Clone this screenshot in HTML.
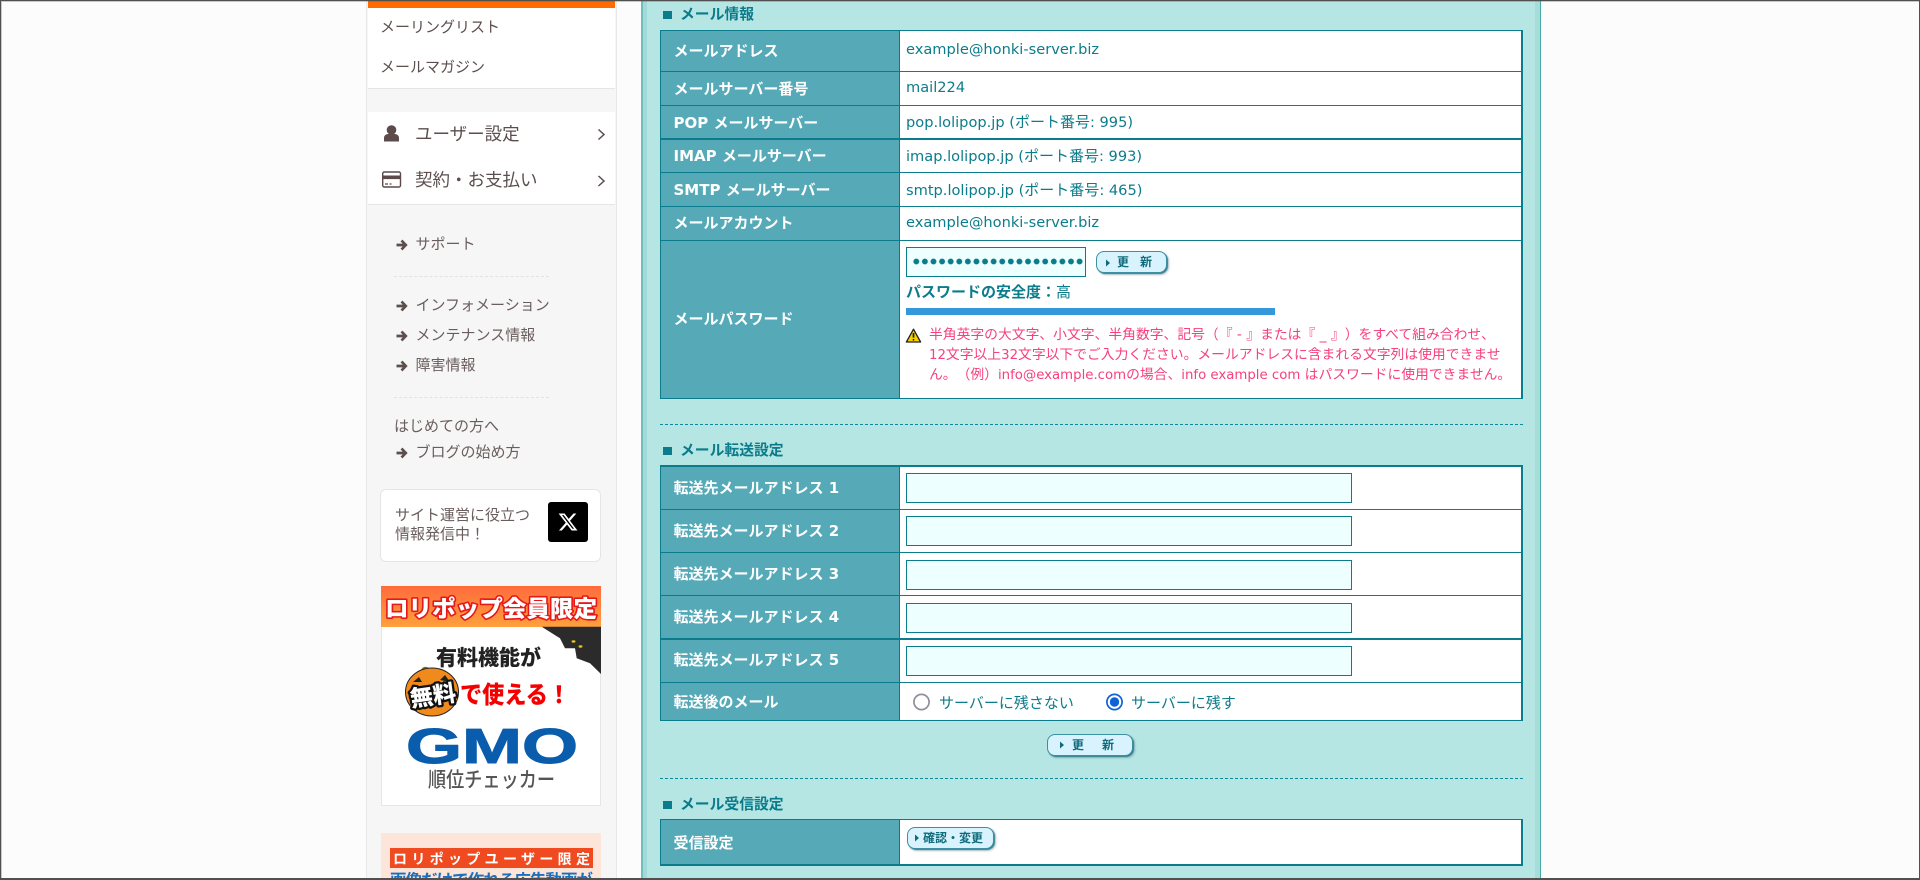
<!DOCTYPE html>
<html lang="ja"><head><meta charset="utf-8"><title>メール設定</title>
<style>
html,body{margin:0;padding:0;width:1920px;height:880px;overflow:hidden;background:#fcfcfc}
body{position:relative;font-family:"DejaVu Sans","Noto Sans CJK JP",sans-serif;color:#0b7c8b;text-spacing-trim:space-all}
div,span,a{position:absolute}
.t span{position:static}
.b{background:#fcfcfc}
.t{white-space:nowrap;line-height:20px;font-size:14px;color:#0b7c8b}
.s{color:#5d4e4e;font-size:15px}
.g{color:#6a5d5d;font-size:15px}
.big{color:#5d4e4e;font-size:17.5px}
.h{font-weight:700;font-size:14.8px;left:680px;color:#0b7b8b}
.l{font-weight:700;font-size:15px;left:673.5px;color:#fff}
.v{left:906px;font-size:14.6px}
.v span{font-size:15px}
.p{left:929px;color:#f6407f;font-size:13.8px}
.p span{font-size:13.3px}
.ln{background:#0a7c8c;left:660px;width:863px;height:1px}
.in{left:906px;width:444px;background:#eeffff;border:1px solid #0a7c8c;height:28px}
.btn{background:#d8f3fd;border:1px solid #3d90a2;border-radius:8px;box-shadow:1px 1px 1px #2f7f90,2px 2px 2px rgba(60,90,100,.3);box-sizing:border-box;height:22px}
.bt{white-space:nowrap;font-weight:700;font-size:12px;line-height:20px;color:#0f6b7b}
.dash{left:660px;width:863px;height:0;border-top:1px dashed #0a8a9a}
.sd{left:394px;width:155px;height:0;border-top:1px dashed #e2e2e2}
</style></head><body>

<!-- sidebar -->
<div style="left:366px;top:0;width:251px;height:880px;background:#f6f6f6;border-left:1px solid #e8e8e8;border-right:1px solid #e8e8e8;box-sizing:border-box"></div>
<div style="left:368px;top:0;width:247px;height:8px;background:#ff6b00"></div>
<div style="left:368px;top:8px;width:247px;height:80px;background:#fff;border-bottom:1px solid #e5e5e5"></div>
<div style="left:368px;top:112px;width:247px;height:92px;background:#fff;border-bottom:1px solid #e5e5e5"></div>

<span class="t s" style="left:380px;top:17px">メーリングリスト</span>
<span class="t s" style="left:380px;top:57px">メールマガジン</span>
<span class="t big" style="left:415px;top:124.5px">ユーザー設定</span>
<span class="t big" style="left:415px;top:170.5px">契約・お支払い</span>
<span class="t g" style="left:415.5px;top:234px">サポート</span>
<div class="sd" style="top:276px"></div>
<span class="t g" style="left:415.5px;top:295px">インフォメーション</span>
<span class="t g" style="left:415.5px;top:325px">メンテナンス情報</span>
<span class="t g" style="left:415.5px;top:355px">障害情報</span>
<div class="sd" style="top:397px"></div>
<span class="t g" style="left:394px;top:416px">はじめての方へ</span>
<span class="t g" style="left:415.5px;top:442px">ブログの始め方</span>

<div style="left:380px;top:489px;width:221px;height:73px;background:#fff;border:1px solid #e5e5e5;border-radius:6px;box-sizing:border-box"></div>
<span class="t g" style="left:395px;top:505px">サイト運営に役立つ</span>
<span class="t g" style="left:395px;top:524px">情報発信中！</span>
<div style="left:548px;top:502px;width:40px;height:40px;background:#000;border-radius:3px"></div>

<!-- banners -->
<div style="left:381px;top:586px;width:220px;height:220px;background:#fff;border:1px solid #e6e6e6;box-sizing:border-box"></div>
<div style="left:381px;top:586px;width:220px;height:41px;background:linear-gradient(#ff6b3c,#ffa03c)"></div>
<div style="left:381px;top:833px;width:220px;height:47px;background:#fde5da"></div>
<div style="left:390px;top:848px;width:203px;height:20px;background:#f04a20"></div>

<!-- main -->
<div style="left:641px;top:0;width:900px;height:880px;background:#b5e6e3"></div>
<div style="left:641px;top:0;width:2px;height:880px;background:#6fbfbd"></div>
<div style="left:643px;top:0;width:4px;height:880px;background:#a2dad7"></div>
<div style="left:1535px;top:0;width:5px;height:880px;background:#a8dcd9"></div>
<div style="left:1540px;top:0;width:1px;height:880px;background:#45aaaa"></div>

<!-- table 1 -->
<div style="left:660px;top:30px;width:863px;height:369px;background:#fff"></div>
<div style="left:660px;top:30px;width:239px;height:369px;background:#56aab8"></div>
<div style="left:660px;top:30px;width:1px;height:369px;background:#0a7c8c"></div>
<div style="left:899px;top:30px;width:1px;height:369px;background:#0a7c8c"></div>
<div style="left:1521px;top:30px;width:2px;height:369px;background:#0a7c8c"></div>
<div class="ln" style="top:30px"></div>
<div class="ln" style="top:71px"></div>
<div class="ln" style="top:105px"></div>
<div class="ln" style="top:138px;height:2px"></div>
<div class="ln" style="top:172px"></div>
<div class="ln" style="top:206px"></div>
<div class="ln" style="top:240px"></div>
<div class="ln" style="top:398px"></div>

<span class="t h" style="top:5px">メール情報</span>
<span class="t l" style="top:41px">メールアドレス</span>
<span class="t l" style="top:79px">メールサーバー番号</span>
<span class="t l" style="top:113px">POP メールサーバー</span>
<span class="t l" style="top:146px">IMAP メールサーバー</span>
<span class="t l" style="top:180px">SMTP メールサーバー</span>
<span class="t l" style="top:213px">メールアカウント</span>
<span class="t l" style="top:309px">メールパスワード</span>

<span class="t v" style="top:40px">example@honki-server.biz</span>
<span class="t v" style="top:78px">mail224</span>
<span class="t v" style="top:112px">pop.lolipop.jp (<span>ポート番号</span>: 995)</span>
<span class="t v" style="top:146px">imap.lolipop.jp (<span>ポート番号</span>: 993)</span>
<span class="t v" style="top:180px">smtp.lolipop.jp (<span>ポート番号</span>: 465)</span>
<span class="t v" style="top:213px">example@honki-server.biz</span>

<div style="left:906px;top:247px;width:178px;height:28px;background:#eeffff;border:1px solid #0a7c8c"></div>
<div style="left:911.5px;top:257px;width:172px;height:9px;background:radial-gradient(circle at 4.3px 4.5px,#0a7c8c 2.6px,transparent 3.2px) 0 0/8.6px 9px repeat-x"></div>
<div class="btn" style="left:1096px;top:251px;width:71px"></div>
<span class="bt" style="left:1117px;top:252px">更</span>
<span class="bt" style="left:1140px;top:252px">新</span>

<span class="t" style="left:906px;top:282px;font-size:15px;font-weight:700">パスワードの安全度：<span style="font-weight:400">高</span></span>
<div style="left:906px;top:308px;width:369px;height:7px;background:#3498db"></div>
<span class="t p" style="top:325px">半角英字の大文字、小文字、半角数字、記号（『 - 』または『 _ 』）をすべて組み合わせ、</span>
<span class="t p" style="top:345px"><span>12</span>文字以上<span>32</span>文字以下でご入力ください。メールアドレスに含まれる文字列は使用できませ</span>
<span class="t p" style="top:365px">ん。（例）<span>info@example.com</span>の場合、<span>info example com</span> はパスワードに使用できません。</span>

<div class="dash" style="top:424px"></div>

<!-- table 2 -->
<span class="t h" style="top:441px">メール転送設定</span>
<div style="left:660px;top:465px;width:863px;height:256px;background:#fff"></div>
<div style="left:660px;top:465px;width:239px;height:256px;background:#56aab8"></div>
<div style="left:660px;top:465px;width:1px;height:256px;background:#0a7c8c"></div>
<div style="left:899px;top:465px;width:1px;height:256px;background:#0a7c8c"></div>
<div style="left:1521px;top:465px;width:2px;height:256px;background:#0a7c8c"></div>
<div class="ln" style="top:465px;height:2px"></div>
<div class="ln" style="top:509px"></div>
<div class="ln" style="top:552px"></div>
<div class="ln" style="top:595px"></div>
<div class="ln" style="top:638px;height:2px"></div>
<div class="ln" style="top:682px"></div>
<div class="ln" style="top:720px"></div>

<span class="t l" style="top:477.5px">転送先メールアドレス 1</span>
<span class="t l" style="top:520.5px">転送先メールアドレス 2</span>
<span class="t l" style="top:563.5px">転送先メールアドレス 3</span>
<span class="t l" style="top:607px">転送先メールアドレス 4</span>
<span class="t l" style="top:650px">転送先メールアドレス 5</span>
<span class="t l" style="top:692px">転送後のメール</span>

<div class="in" style="top:473px"></div>
<div class="in" style="top:516px"></div>
<div class="in" style="top:560px"></div>
<div class="in" style="top:603px"></div>
<div class="in" style="top:646px"></div>

<span class="t" style="left:939px;top:692.5px;font-size:15px">サーバーに残さない</span>
<span class="t" style="left:1131px;top:692.5px;font-size:15px">サーバーに残す</span>

<div class="btn" style="left:1047px;top:734px;width:86px"></div>
<span class="bt" style="left:1072px;top:735px">更</span>
<span class="bt" style="left:1102px;top:735px">新</span>

<div class="dash" style="top:778px"></div>

<!-- table 3 -->
<span class="t h" style="top:795px">メール受信設定</span>
<div style="left:660px;top:819px;width:863px;height:47px;background:#fff"></div>
<div style="left:660px;top:819px;width:239px;height:47px;background:#56aab8"></div>
<div style="left:660px;top:819px;width:1px;height:47px;background:#0a7c8c"></div>
<div style="left:899px;top:819px;width:1px;height:47px;background:#0a7c8c"></div>
<div style="left:1521px;top:819px;width:2px;height:47px;background:#0a7c8c"></div>
<div class="ln" style="top:819px"></div>
<div class="ln" style="top:864px;height:2px"></div>
<span class="t l" style="top:832.5px">受信設定</span>
<div class="btn" style="left:907px;top:827px;width:87px"></div>
<span class="bt" style="left:923px;top:828px">確認・変更</span>

<!-- svg overlay: icons + banner art -->
<svg width="1920" height="880" viewBox="0 0 1920 880" style="position:absolute;left:0;top:0" xmlns="http://www.w3.org/2000/svg">
  <!-- user -->
  <circle cx="391.5" cy="130" r="4.8" fill="#5d4a4a"/>
  <path d="M384 141.5v-3.5c0-2.6 2.2-4 4.2-4h6.6c2 0 4.2 1.4 4.2 4v3.5z" fill="#5d4a4a"/>
  <!-- card -->
  <rect x="382.7" y="172" width="17.8" height="15" rx="1.5" fill="none" stroke="#5d4a4a" stroke-width="1.4"/>
  <rect x="382.7" y="175.5" width="17.8" height="3.6" fill="#5d4a4a"/>
  <path d="M385 184h3M389.5 184h2" stroke="#5d4a4a" stroke-width="1.2"/>
  <!-- chevrons -->
  <path d="M598.5 129.5l5.5 5-5.5 5M598.5 176l5.5 5-5.5 5" fill="none" stroke="#5d4e4e" stroke-width="1.5"/>
  <!-- arrows -->
  <g fill="none" stroke="#5d4e4e" stroke-width="2.7">
    <path d="M396.5 245h9M401.5 240.5l4.3 4.5-4.3 4.5"/>
    <path d="M396.5 306h9M401.5 301.5l4.3 4.5-4.3 4.5"/>
    <path d="M396.5 336h9M401.5 331.5l4.3 4.5-4.3 4.5"/>
    <path d="M396.5 366h9M401.5 361.5l4.3 4.5-4.3 4.5"/>
    <path d="M396.5 453h9M401.5 448.5l4.3 4.5-4.3 4.5"/>
  </g>
  <!-- X logo -->
  <g transform="translate(557.5,511.5) scale(0.875)"><path fill="#fff" d="M18.244 2.25h3.308l-7.227 8.26 8.502 11.24H16.17l-5.214-6.817L4.99 21.75H1.68l7.73-8.835L1.254 2.25H8.08l4.713 6.231zm-1.161 17.52h1.833L7.084 4.126H5.117z"/></g>

  <!-- banner 1 -->
  <text x="385" y="616.5" font-family="Noto Sans CJK JP" font-weight="900" font-size="23" textLength="212" lengthAdjust="spacingAndGlyphs" fill="#fff" stroke="#e81818" stroke-width="3.2" paint-order="stroke" stroke-linejoin="round">ロリポップ会員限定</text>
  <path d="M541.7 626.7H601V674L590 663.3 576.7 658.3 575 648.3 565 648.3 560 638.3z" fill="#2b2b2b"/>
  <ellipse cx="573.5" cy="641.5" rx="2" ry="1.2" fill="#f0c020"/><ellipse cx="580.5" cy="646.5" rx="2" ry="1.2" fill="#f0c020"/>
  <text x="436" y="665" font-family="Noto Sans CJK JP" font-weight="900" font-size="21" textLength="105" lengthAdjust="spacingAndGlyphs" fill="#222">有料機能が</text>
  <path d="M421 672c0-4 3-6 6-5s3 2 4 3l-1 5z" fill="#6d7d2a"/>
  <ellipse cx="432" cy="692" rx="26.5" ry="24" fill="#f08a1c" stroke="#222" stroke-width="1"/>
  <path d="M413 682l6-5 3 5zM440 680l5-5 5 7z" fill="#222"/>
  <g transform="rotate(-8 432 696)"><text x="410" y="704" font-family="Noto Sans CJK JP" font-weight="900" font-size="23" fill="#fff" stroke="#111" stroke-width="4.5" paint-order="stroke" stroke-linejoin="round">無料</text></g>
  <text x="460" y="703" font-family="Noto Sans CJK JP" font-weight="900" font-size="24" textLength="110" lengthAdjust="spacingAndGlyphs" fill="#f40000">で使える！</text>
  <text x="406" y="763" font-family="Liberation Sans" font-weight="700" font-size="49" textLength="172" lengthAdjust="spacingAndGlyphs" fill="#0a5cac" stroke="#0a5cac" stroke-width="1">GMO</text>
  <text x="428" y="787" font-family="Noto Sans CJK JP" font-weight="500" font-size="21" textLength="127" lengthAdjust="spacingAndGlyphs" fill="#555">順位チェッカー</text>

  <!-- banner 2 -->
  <text x="393" y="864" font-family="Noto Sans CJK JP" font-weight="700" font-size="14" textLength="197" lengthAdjust="spacing" fill="#fff">ロリポップユーザー限定</text>
  <text x="390" y="886" font-family="Noto Sans CJK JP" font-weight="700" font-size="16.5" textLength="203" lengthAdjust="spacing" fill="#1a70c0">画像だけで作れる広告動画が</text>

  <!-- main squares -->
  <rect x="663" y="11" width="9" height="8" fill="#0a7c8c"/>
  <rect x="663" y="447" width="9" height="8" fill="#0a7c8c"/>
  <rect x="663" y="801" width="9" height="8" fill="#0a7c8c"/>

  <!-- warning -->
  <path d="M913.5 329.2L920.6 342H906.4z" fill="#f8d000" stroke="#222" stroke-width="1.3" stroke-linejoin="round"/>
  <path d="M913.5 333v4.6" stroke="#222" stroke-width="1.7"/><circle cx="913.5" cy="339.8" r=".9" fill="#222"/>

  <!-- button triangles -->
  <path d="M1106 259.5l4 3.5-4 3.5zM1060 741.5l4 3.5-4 3.5zM915 834.5l4 3.5-4 3.5z" fill="#0f6b7b"/>

  <!-- radios -->
  <circle cx="921.5" cy="702" r="7.6" fill="#fff" stroke="#8f8f9d" stroke-width="1.7"/>
  <circle cx="1114.5" cy="702" r="7.6" fill="#fff" stroke="#0f62d6" stroke-width="1.7"/>
  <circle cx="1114.5" cy="702" r="4.7" fill="#0f62d6"/>
</svg>

<!-- screen edge -->
<div style="left:0;top:0;width:1920px;height:880px;box-sizing:border-box;border:1px solid #505050;border-bottom-width:2px;box-shadow:inset 1px 1px 0 rgba(80,80,80,.3)"></div>
</body></html>
